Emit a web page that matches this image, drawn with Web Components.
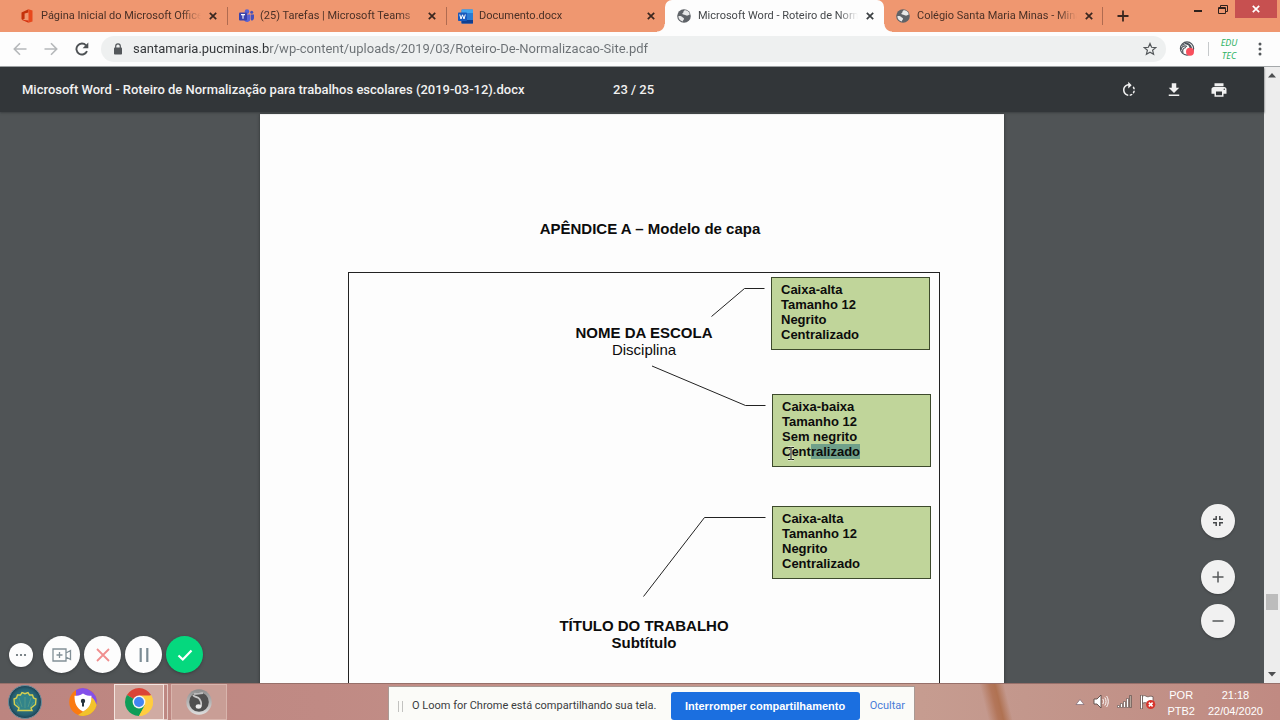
<!DOCTYPE html>
<html lang="pt-BR">
<head>
<meta charset="utf-8">
<title>Microsoft Word - Roteiro de Normalização</title>
<style>
  html, body { margin: 0; height: 100%; }
  body { font-family: Roboto, "Liberation Sans", sans-serif; background: #505456; overflow: hidden; }
  mark { background: #6fa08a; color: inherit; }
</style>
</head>
<body>
<desktop-screen>
  <tab-strip slot="tabs">
    <browser-tab icon="office">Página Inicial do Microsoft Office Home</browser-tab>
    <browser-tab icon="teams" divided>(25) Tarefas | Microsoft Teams</browser-tab>
    <browser-tab icon="word" divided>Documento.docx</browser-tab>
    <browser-tab icon="globe" active>Microsoft Word - Roteiro de Normalização</browser-tab>
    <browser-tab icon="globe" last>Colégio Santa Maria Minas - Minas</browser-tab>
  </tab-strip>
  <address-bar slot="address" host-part="santamaria.pucminas.br" path-part="/wp-content/uploads/2019/03/Roteiro-De-Normalizacao-Site.pdf"></address-bar>
  <pdf-viewer slot="content">
    <span slot="title">Microsoft Word - Roteiro de Normalização para trabalhos escolares (2019-03-12).docx</span>
    <span slot="pages">23 / 25</span>
    <doc-page>
      <span slot="heading">APÊNDICE A – Modelo de capa</span>
      <cover-title slot="titles"><b>NOME DA ESCOLA</b><span>Disciplina</span></cover-title>
      <cover-title slot="titles"><b>TÍTULO DO TRABALHO</b><b>Subtítulo</b></cover-title>
      <format-note slot="notes" style="--x:422px;--y:4px"><div>Caixa-alta</div><div>Tamanho 12</div><div>Negrito</div><div>Centralizado</div></format-note>
      <format-note slot="notes" style="--x:423px;--y:121px"><div>Caixa-baixa</div><div>Tamanho 12</div><div>Sem negrito</div><div>Cent<mark>ralizado</mark></div></format-note>
      <format-note slot="notes" style="--x:423px;--y:233px"><div>Caixa-alta</div><div>Tamanho 12</div><div>Negrito</div><div>Centralizado</div></format-note>
    </doc-page>
    <loom-controls slot="overlay"></loom-controls>
  </pdf-viewer>
  <task-bar slot="taskbar">
    <share-bar slot="share">O Loom for Chrome está compartilhando sua tela.</share-bar>
    <system-tray slot="tray"></system-tray>
  </task-bar>
</desktop-screen>

<script>
const RESET = `
  :host, *, *::before, *::after { box-sizing: border-box; }
  button { border: 0; padding: 0; margin: 0; background: none; color: inherit; font: inherit;
           display: flex; align-items: center; justify-content: center; flex: none; }
  svg { display: block; flex: none; }
`;
function define(name, render) {
  customElements.define(name, class extends HTMLElement {
    connectedCallback() {
      if (this.shadowRoot) return;
      const t = document.createElement('template');
      t.innerHTML = render(this);
      const root = this.attachShadow({ mode: 'open' });
      root.innerHTML = `<style>${RESET}</style>`;
      root.append(t.content.cloneNode(true));
    }
  });
}

const FAVICONS = {
  office: `<svg width="14" height="14" viewBox="0 0 14 14"><path d="M1.5 3.5 8.5.3v3.1L4.6 4.6v5.2L2.6 11l-1.100-1z" fill="#c4310a"/><path d="M8.500.3 12.500 1.600v10.800L8.500 13.800z" fill="#e8481c"/><path d="M1.500 10.800 8.500 11.600v2.200z" fill="#d42f0c"/></svg>`,
  teams: `<svg width="15" height="14" viewBox="0 0 15 14"><circle cx="8" cy="2.600" r="2.300" fill="#5b63d3"/><circle cx="12.700" cy="3.300" r="1.500" fill="#4750b8"/><path d="M5 5.500h6.500V10a3.400 3.400 0 0 1-6.500 1z" fill="#5b63d3"/><path d="M12 5.500h3V9a2.400 2.400 0 0 1-3 2.300z" fill="#4750b8"/><rect y="3.500" width="8" height="8" rx="1" fill="#3a42ac"/><path d="M2 5.600h4M4 5.600v4.200" stroke="#fff" stroke-width="1.100"/></svg>`,
  word: `<svg width="15" height="15" viewBox="0 0 15 15"><rect x="3.500" y=".5" width="11.500" height="14" rx="1" fill="#2b7cd3"/><rect x="3.500" y=".5" width="11.500" height="3.500" fill="#41a5ee"/><rect x="3.500" y="11" width="11.500" height="3.500" fill="#103f91"/><rect y="3.500" width="9" height="8.500" rx=".8" fill="#185abd"/><path d="M1.800 5.500 3 10l1.500-4.200L6 10l1.300-4.500" fill="none" stroke="#fff"/></svg>`,
  globe: `<svg width="14" height="14" viewBox="0 0 14 14"><circle cx="7" cy="7" r="6.800" fill="#5f6368"/><path d="M7.300 1.400c-1.500.9-.3 2-1.500 2.700-1 .6-.5 1.500.6 1.500 1.500 0 2 .8 3 1 1.200.2 1.800-.2 3.200-.8.300-2.500-2.500-4.900-5.300-4.400zM1.300 7.300c.2 2.700 2 4.800 4.500 5.200.2-1.300 1.200-1.700 1.200-2.700 0-1.300-1.500-1-2-2-.6-.7-2.300-1-3.700-.500z" fill="#fff" fill-opacity=".85"/></svg>`
};
const X = c => `<svg width="8" height="8" viewBox="0 0 8 8"><path d="M.8.8l6.400 6.400M7.200.8L.8 7.200" stroke="${c}" stroke-width="1.700"/></svg>`;

define('desktop-screen', () => `
<style>
  :host { display: flex; flex-direction: column; height: 100vh; }
  .content { flex: 1; min-height: 0; display: flex; }
  ::slotted(pdf-viewer) { flex: 1; min-width: 0; }
</style>
<slot name="tabs"></slot><slot name="address"></slot><div class="content"><slot name="content"></slot></div><slot name="taskbar"></slot>`);

define('tab-strip', () => `
<style>
  :host { display: flex; flex: none; height: 32px; padding-left: 8px; background: #ef9770; color: #4a3026; }
  .tabs { display: flex; flex: 0 1 1096px; min-width: 0; }
  .add { width: 38px; height: 32px; }
  .window { display: flex; margin-left: auto; padding-right: 3px; align-items: flex-start; }
  .window button { width: 25px; height: 18px; }
  .window .close { width: 42px; background: #c75050; }
</style>
<div class="tabs"><slot></slot></div>
<button class="add" aria-label="Nova guia"><svg width="12" height="12" viewBox="0 0 12 12"><path d="M6 .5v11M.5 6h11" stroke="#3a2720" stroke-width="1.800"/></svg></button>
<div class="window">
  <button aria-label="Minimizar"><svg width="8" height="10" viewBox="0 0 8 10"><path d="M0 7h8" stroke="#2e211c" stroke-width="2"/></svg></button>
  <button aria-label="Restaurar"><svg width="10" height="9" viewBox="0 0 10 9"><path d="M2.500 2V.5h7v6H8" fill="none" stroke="#2e211c"/><path d="M.5 2.500h7v6h-7zM.5 3.500h7" fill="none" stroke="#2e211c"/></svg></button>
  <button class="close" aria-label="Fechar">${X('#fff')}</button>
</div>`);

define('browser-tab', el => `
<style>
  :host { display: flex; flex: 0 1 219px; min-width: 0; height: 32px; align-items: center; position: relative; padding: 0 6px 0 12px; }
  :host([divided])::before, :host([last])::after { content: ""; position: absolute; left: 0; top: 7px; width: 1px; height: 18px; background: #b06b50; }
  :host([last])::after { left: auto; right: 0; }
  :host([active]) { background: #fdfdfd; border-radius: 7px 7px 0 0; color: #45484b; }
  :host([active])::before, :host([active])::after { content: ""; position: absolute; bottom: 0; width: 8px; height: 8px; }
  :host([active])::before { right: 100%; background: radial-gradient(circle at 0 0, transparent 7px, #fdfdfd 8px); }
  :host([active])::after { left: 100%; background: radial-gradient(circle at 100% 0, transparent 7px, #fdfdfd 8px); }
  .select { flex: 1; min-width: 0; height: 32px; gap: 7px; justify-content: flex-start; }
  .label { flex: 1; min-width: 0; overflow: hidden; white-space: nowrap; text-align: left; font-size: 11px; line-height: 16px;
           -webkit-mask-image: linear-gradient(to left, transparent, #000 20px); mask-image: linear-gradient(to left, transparent, #000 20px); }
  .icon { width: 14px; display: flex; justify-content: center; flex: none; }
  .close { width: 16px; height: 16px; margin-left: 4px; }
</style>
<button class="select" role="tab"><span class="icon">${FAVICONS[el.getAttribute('icon')]}</span><span class="label"><slot></slot></span></button>
<button class="close" aria-label="Fechar guia">${X(el.hasAttribute('active') ? '#3c4043' : '#3a2720')}</button>`);

define('address-bar', el => `
<style>
  :host { display: flex; flex: none; height: 35px; align-items: center; background: #fdfdfd; border-bottom: 1px solid #a4a8aa; padding: 0 10px 0 5px; }
  .nav { display: flex; gap: 1px; margin-right: 4px; }
  .nav button { width: 30px; height: 30px; }
  .box { flex: 1; min-width: 0; display: flex; align-items: center; height: 26px; border-radius: 13px; background: #eef0f0; padding: 0 9px 0 12px; gap: 10px; }
  input { flex: 1; min-width: 0; height: 20px; border: 0; padding: 0; outline: 0; font: 13px/20px Roboto, sans-serif;
          color: transparent; background: linear-gradient(to right, #303336 137px, #6b7074 137px); -webkit-background-clip: text; background-clip: text; }
  .ext { width: 42px; height: 26px; }
  .sep { width: 1px; height: 14px; background: #c6c9cb; }
  .avatar { width: 24px; height: 26px; margin-left: 8px; flex-direction: column; font: italic 9px/13px "Noto Sans", sans-serif; color: #2fb264; }
  .avatar span { display: block; }
  .menu { width: 20px; height: 26px; margin-left: 9px; }
</style>
<div class="nav">
  <button aria-label="Voltar"><svg width="14" height="14" viewBox="0 0 14 14"><path d="M13.500 7H1.500M7 1.300 1.300 7 7 12.700" fill="none" stroke="#b5b8ba" stroke-width="1.600"/></svg></button>
  <button aria-label="Avançar"><svg width="14" height="14" viewBox="0 0 14 14"><path d="M.5 7h12M7 1.300 12.700 7 7 12.700" fill="none" stroke="#b5b8ba" stroke-width="1.600"/></svg></button>
  <button aria-label="Recarregar"><svg width="14" height="14" viewBox="0 0 14 14"><path d="M12 9.200A5.500 5.500 0 1 1 11 3.300" fill="none" stroke="#4d5154" stroke-width="1.900"/><path d="M13.300.5v5.700H7.600z" fill="#4d5154"/></svg></button>
</div>
<div class="box">
  <svg width="10" height="12" viewBox="0 0 10 12"><rect x="1" y="4.500" width="8" height="7" rx=".8" fill="#53575a"/><path d="M2.700 5V3.200a2.300 2.300 0 0 1 4.600 0V5" fill="none" stroke="#53575a" stroke-width="1.200"/></svg>
  <input type="text" aria-label="Endereço" value="${el.getAttribute('host-part')}${el.getAttribute('path-part')}">
  <button aria-label="Favoritar"><svg width="14" height="14" viewBox="0 0 14 14"><path d="M7 1.500l1.600 3.800 4.100.3-3.100 2.700 1 4L7 10.200l-3.600 2.100 1-4L1.300 5.600l4.100-.300z" fill="none" stroke="#53575a" stroke-width="1.200"/></svg></button>
</div>
<button class="ext" aria-label="Loom"><svg width="16" height="16" viewBox="0 0 16 16"><g fill="none" stroke="#4d535b" stroke-width="1.200"><circle cx="8" cy="7.500" r="6.600"/><path d="M3 4.500c2-2.500 7-2.500 8 1.500.5 2-1 4-3 4M2 9c0-3 3-5 6-3.500M4 12C3 9 4 7 7 6.500M6 1.800c3 0 6 2 6.500 5.500"/></g><circle cx="11" cy="10.800" r="4" fill="#f94f5d"/></svg></button>
<div class="sep"></div>
<button class="avatar" aria-label="Perfil"><span>EDU</span><span>TEC</span></button>
<button class="menu" aria-label="Menu"><svg width="4" height="14" viewBox="0 0 4 14" fill="#53575a"><circle cx="2" cy="2" r="1.500"/><circle cx="2" cy="7" r="1.500"/><circle cx="2" cy="12" r="1.500"/></svg></button>`);

define('pdf-viewer', () => `
<style>
  :host { display: flex; min-height: 0; }
  .main { flex: 1; min-width: 0; display: flex; flex-direction: column; position: relative; }
  header { flex: none; display: flex; align-items: center; height: 45px; background: #323639; color: #f1f1f1;
           font-weight: 500; font-size: 13px; line-height: 18px; padding: 0 33px 0 22px; position: relative; box-shadow: 0 1px 2px #3b3f41; }
  .title { flex: 0 1 591px; white-space: nowrap; overflow: hidden; }
  .tools { margin-left: auto; display: flex; gap: 21px; }
  .tools button { width: 24px; height: 24px; }
  .stage { flex: 1; min-height: 0; overflow: hidden; background: #505456; padding-top: 2px; }
  .zoom { position: absolute; right: 29px; bottom: 45px; display: flex; flex-direction: column; gap: 10px; }
  .zoom button { width: 34px; height: 34px; border-radius: 17px; background: #f1f1f1; box-shadow: 0 1px 2px #3a3d3f; }
  .zoom button:first-child { margin-bottom: 12px; }
  .scroll { flex: none; width: 16px; background: #ededed; display: flex; flex-direction: column; align-items: center; padding: 6px 0; }
  .track { flex: 1; width: 12px; display: flex; flex-direction: column; justify-content: flex-end; padding-bottom: 62px; }
  .thumb { height: 16px; background: #bcbcbc; }
</style>
<div class="main">
  <header><div class="title"><slot name="title"></slot></div><slot name="pages"></slot>
    <div class="tools">
      <button aria-label="Girar"><svg width="18" height="18" viewBox="0 0 24 24" fill="#f1f1f1"><path d="M15.550 5.550L11 1v3.070C7.060 4.560 4 7.920 4 12s3.050 7.440 7 7.930v-2.020c-2.840-.48-5-2.940-5-5.910s2.160-5.430 5-5.910V10l4.550-4.450zM19.930 11c-.17-1.390-.72-2.730-1.620-3.890l-1.420 1.420c.54.75.88 1.600 1.020 2.470h2.020zM13 17.900v2.020c1.390-.17 2.740-.71 3.900-1.610l-1.440-1.440c-.75.54-1.590.89-2.460 1.030zm3.890-2.420l1.420 1.410c.9-1.160 1.450-2.500 1.620-3.890h-2.020c-.14.87-.48 1.720-1.020 2.480z"/></svg></button>
      <button aria-label="Baixar"><svg width="18" height="18" viewBox="0 0 24 24" fill="#f1f1f1"><path d="M19 9h-4V3H9v6H5l7 7 7-7zM5 18v2h14v-2H5z"/></svg></button>
      <button aria-label="Imprimir"><svg width="18" height="18" viewBox="0 0 24 24" fill="#f1f1f1"><path d="M19 8H5c-1.660 0-3 1.340-3 3v6h4v4h12v-4h4v-6c0-1.660-1.340-3-3-3zm-3 11H8v-5h8v5zm3-7c-.55 0-1-.45-1-1s.45-1 1-1 1 .45 1 1-.45 1-1 1zm-1-9H6v4h12V3z"/></svg></button>
    </div>
  </header>
  <div class="stage"><slot></slot></div>
  <slot name="overlay"></slot>
  <div class="zoom">
    <button aria-label="Ajustar à página"><svg width="12" height="12" viewBox="0 0 12 12" fill="none" stroke="#45484a" stroke-width="1.500"><path d="M1 4.200h3.200V1M7.800 1v3.200H11M1 7.800h3.200V11M7.800 11V7.800H11"/></svg></button>
    <button aria-label="Aumentar zoom"><svg width="12" height="12" viewBox="0 0 12 12"><path d="M6 .5v11M.5 6h11" stroke="#55585a" stroke-width="1.500"/></svg></button>
    <button aria-label="Reduzir zoom"><svg width="12" height="12" viewBox="0 0 12 12"><path d="M.5 6h11" stroke="#55585a" stroke-width="1.500"/></svg></button>
  </div>
</div>
<div class="scroll">
  <svg width="8" height="5" viewBox="0 0 8 5"><path d="M4 0 8 4.500H0z" fill="#4d4f51"/></svg>
  <div class="track"><div class="thumb"></div></div>
  <svg width="8" height="5" viewBox="0 0 8 5"><path d="M4 4.500 8 0H0z" fill="#4d4f51"/></svg>
</div>`);

define('doc-page', () => `
<style>
  :host { display: block; max-width: 744px; min-height: 1052px; margin: 0 auto; padding: 106px 64px 0 88px; background: #fdfdfd; color: #0c0c0c;
          box-shadow: 0 0 3px #2f3234; font: 15px/17px "Liberation Sans", Arial, sans-serif; }
  h1 { margin: 0 0 35px; padding-left: 12px; font: inherit; font-weight: 700; text-align: center; }
  .frame { position: relative; height: 800px; border: 1px solid #222; padding-top: 51px; display: flex; flex-direction: column; gap: 259px; }
  .lines { position: absolute; left: 0; top: 0; }
  .caret { position: absolute; left: 438px; top: 173px; }
</style>
<h1><slot name="heading"></slot></h1>
<div class="frame">
  <slot name="titles"></slot>
  <svg class="lines" width="590" height="400" viewBox="0 0 590 400" fill="none" stroke="#222"><path d="M362.500 43.500 395.500 15.500H415.500M303 93 396.500 132.500H416.500M294.500 323.500 355.500 244.500H416.500"/></svg>
  <slot name="notes"></slot>
  <svg class="caret" width="8" height="15" viewBox="0 0 8 15" fill="none"><path d="M1 1.500h2.500L4 2l.5-.5H7M4 2v11M1 13.500h2.500L4 13l.5.500H7" stroke="#fff" stroke-width="2.600" stroke-opacity=".6"/><path d="M1 1.500h2.500L4 2l.5-.5H7M4 2v11M1 13.500h2.500L4 13l.5.500H7" stroke="#111"/></svg>
</div>`);

define('cover-title', () => `
<style>:host { display: flex; flex-direction: column; align-items: center; }</style><slot></slot>`);

define('format-note', () => `
<style>
  :host { position: absolute; left: var(--x); top: var(--y); width: 159px; padding: 4px 9px 7px; border: 1px solid #3d4a2c; background: #c0d59a;
          font-weight: 700; font-size: 13px; line-height: 15px; }
  ::slotted(div) { white-space: nowrap; }
</style><slot></slot>`);

define('loom-controls', () => `
<style>
  :host { position: absolute; left: 9px; bottom: 10px; display: flex; align-items: center; gap: 4px; }
  button { width: 37px; height: 37px; border-radius: 50%; background: #fdfdfd; box-shadow: 0 1px 3px #3a3d3f; }
  .more { width: 24px; height: 24px; margin-right: 6px; }
  .done { background: #05d87e; }
</style>
<button class="more" aria-label="Mais"><svg width="12" height="4" viewBox="0 0 12 4" fill="#5c676c"><circle cx="2" cy="2" r="1.100"/><circle cx="6" cy="2" r="1.100"/><circle cx="10" cy="2" r="1.100"/></svg></button>
<button aria-label="Câmera"><svg width="20" height="14" viewBox="0 0 20 14" fill="none" stroke="#829097" stroke-width="1.300"><path d="M1 1h13v4l4.500-2.500v9L14 9v4H1zM14 5v4M7.500 4v6M4.500 7h6"/></svg></button>
<button aria-label="Cancelar"><svg width="14" height="14" viewBox="0 0 14 14"><path d="M1 1l12 12M13 1 1 13" stroke="#f08e8e" stroke-width="1.800"/></svg></button>
<button aria-label="Pausar"><svg width="10" height="14" viewBox="0 0 10 14"><path d="M1.700 0v14M8.300 0v14" stroke="#7c8c94" stroke-width="2.200"/></svg></button>
<button class="done" aria-label="Concluir"><svg width="16" height="12" viewBox="0 0 16 12"><path d="M1.500 6.500 5.800 10.500 14.500 1.500" fill="none" stroke="#fff" stroke-width="2.200"/></svg></button>`);

define('task-bar', () => `
<style>
  :host { display: flex; flex: none; height: 37px; overflow: hidden; box-shadow: inset 0 1px #97706a;
    background: linear-gradient(76deg, transparent 30%, #b3765a 47%, #b07252 55%, transparent 70%) 79% 0 / 52px 37px no-repeat,
                linear-gradient(to right, #bc8580, #c08a84 25%, #c69c90 72%, #c3978c 80%, #c08a82); }
  .apps { flex: 0 1 388px; display: flex; align-items: center; padding: 0 0 0 8px; min-width: 0; }
  .apps button { height: 36px; margin-top: 1px; }
  .start { width: 34px; }
  .apps .avast { width: 28px; margin-left: 27px; }
  .apps .chrome { width: 50px; margin-left: 17px; border: 1px solid #f3e4df; background: #d0aba3; }
  .stack { width: 4px; height: 36px; margin-top: 1px; border: 1px solid #e3c9c3; border-left: 0; }
  .apps .player { width: 56px; margin-left: 3px; border: 1px solid #d9b5ad; background: #c99e96; }
  .tray { margin-left: auto; display: flex; }
</style>
<div class="apps">
  <button class="start" aria-label="Iniciar"><svg width="34" height="34" viewBox="0 0 34 34"><defs><radialGradient id="s"><stop offset="0" stop-color="#3f9295"/><stop offset=".8" stop-color="#265f70"/><stop offset="1" stop-color="#1d4052"/></radialGradient></defs><circle cx="17" cy="17" r="16.500" fill="url(#s)" stroke="#6b8d9b"/><path d="M11 23 6.500 19.500 6 14l2.500-1 1-3 3 0 1.500-2.500 3 1.200 3-1.200L21.500 10l3 0 1 3 2.500 1-.5 5.500L23 23l1 2.500H10z" fill="#32848a" stroke="#d9d04e" stroke-width="1.400"/><path d="M17 23V12M14 22l-3-9M20 22l3-9M11.500 22 8.500 17M22.500 22l3-5" stroke="#5e9f86" stroke-width=".7"/></svg></button>
  <button class="avast" aria-label="Navegador seguro"><svg width="28" height="28" viewBox="0 0 28 28"><circle cx="14" cy="14" r="13.800" fill="#fa7a12"/><path d="M28 14A14 14 0 0 1 9 27l9-6 5-12z" fill="#f2c32c"/><path d="M7 2A14 14 0 0 1 27.500 17C26 11 23 8.500 19 8H7z" fill="#8350ea"/><path d="M14 5.500c3 2 5.500 2.300 8.500 2.300 0 7.500-2 12.500-8.500 15.700-6.500-3.200-8.500-8.200-8.500-15.700 3 0 5.500-.3 8.500-2.300z" fill="#fff"/><circle cx="14" cy="13" r="2.200" fill="#26333c"/><path d="M13 13h2v5.500h-2z" fill="#26333c"/></svg></button>
  <button class="chrome" aria-label="Chrome"><svg width="28" height="28" viewBox="0 0 28 28"><path d="M14 14 1.900 7A14 14 0 0 1 26.100 7z" fill="#db4437"/><path d="M14 14H26.100L26.100 7A14 14 0 0 1 14 28z" fill="#ffcd40"/><path d="M14 14 20 17.500 14 28A14 14 0 0 1 1.900 7z" fill="#0f9d58"/><path d="M14 7.500h12.400A14 14 0 0 1 14 28l5.600-10.500z" fill="#ffcd40"/><circle cx="14" cy="14" r="6.400" fill="#f5f5f5"/><circle cx="14" cy="14" r="5" fill="#4285f4"/></svg></button>
  <div class="stack"></div>
  <button class="player" aria-label="Player"><svg width="26" height="26" viewBox="0 0 26 26"><defs><linearGradient id="r" x2="0" y2="1"><stop stop-color="#8c8c8c"/><stop offset="1" stop-color="#dedede"/></linearGradient></defs><circle cx="13" cy="13" r="12.700" fill="url(#r)"/><circle cx="13" cy="13" r="9.800" fill="#505050"/><path d="M7 6c2 3 4.500 1 6.500 4 1.800 2.800 3 5 .8 8" fill="none" stroke="#c9c9c9" stroke-width="1.800"/><ellipse cx="12.500" cy="17.500" rx="2.800" ry="2.200" fill="#ececec"/><path d="M8 5l9-1" stroke="#bbb" stroke-width="2"/></svg></button>
</div>
<slot name="share"></slot>
<div class="tray"><slot name="tray"></slot></div>`);

define('share-bar', () => `
<style>
  :host { display: flex; flex: 0 1 527px; align-items: center; margin-top: 3px; height: 34px; padding: 5px 9px 0;
          background: #fbfbf8; border: 1px solid #a99a94; border-bottom: 0; color: #3a3c3e; font: 11px/16px Roboto, sans-serif; }
  .grip { width: 5px; height: 11px; border: solid #c2c2c0; border-width: 0 1px; margin-right: 9px; }
  .text { flex: 1; white-space: nowrap; }
  .stop { width: 189px; height: 28px; border-radius: 3px; background: #1b6fe0; color: #fff; font: 700 11px/16px "Liberation Sans", sans-serif; }
  a { margin-left: 10px; color: #4a7bd8; text-decoration: none; }
</style>
<div class="grip"></div><div class="text"><slot></slot></div>
<button class="stop">Interromper compartilhamento</button><a href="#ocultar">Ocultar</a>`);

define('system-tray', () => `
<style>
  :host { display: flex; align-items: center; padding-right: 17px; color: #fff; font: 11px/16px "Liberation Sans", sans-serif; }
  .icons { display: flex; align-items: center; gap: 8px; margin-right: 11px; }
  .lang, .clock { text-align: center; padding-top: 2px; }
  .clock { margin-left: 13px; }
</style>
<div class="icons">
  <svg width="10" height="6" viewBox="0 0 10 6"><path d="M5 .5 9 5.500H1z" fill="#fff" stroke="#6d5a6a" stroke-width=".6"/></svg>
  <svg width="16" height="15" viewBox="0 0 16 15"><path d="M1 5h3l4-4v13l-4-4H1z" fill="#fff" stroke="#594946" stroke-width=".9"/><path d="M9.800 5c1 1.500 1 3.500 0 5M11.800 3.500c1.700 2.500 1.700 5.500 0 8M13.600 2c2.200 3.500 2.200 7.500 0 11" fill="none" stroke="#fff"/></svg>
  <svg width="15" height="13" viewBox="0 0 15 13" fill="#fff" stroke="#594946" stroke-width=".6"><path d="M.5 10.500h2v2h-2zM3.500 8.500h2v4h-2zM6.500 6.500h2v6h-2zM9.500 3.500h2v9h-2z"/><path d="M12.500.5h2v12h-2z" fill="#b5a69c"/></svg>
  <svg width="16" height="16" viewBox="0 0 16 16"><path d="M1.500 1v14" stroke="#594946" stroke-width="2.400"/><path d="M1.500 1.500v13" stroke="#fff" stroke-width="1.200"/><path d="M2.500 2c3-1.500 4 1.500 6 .7 1.500-.7 3-.7 4.500 0V9c-2-1-3.500 1-5.500.3-1.700-.8-3-1-5 0z" fill="#fff" stroke="#594946" stroke-width=".7"/><circle cx="10.700" cy="10.500" r="4.600" fill="#d8342c"/><path d="M8.800 8.600l3.800 3.800M12.600 8.600l-3.800 3.800" stroke="#fff" stroke-width="1.500"/></svg>
</div>
<div class="lang"><div>POR</div><div>PTB2</div></div>
<div class="clock"><div>21:18</div><div>22/04/2020</div></div>`);
</script>
</body>
</html>
